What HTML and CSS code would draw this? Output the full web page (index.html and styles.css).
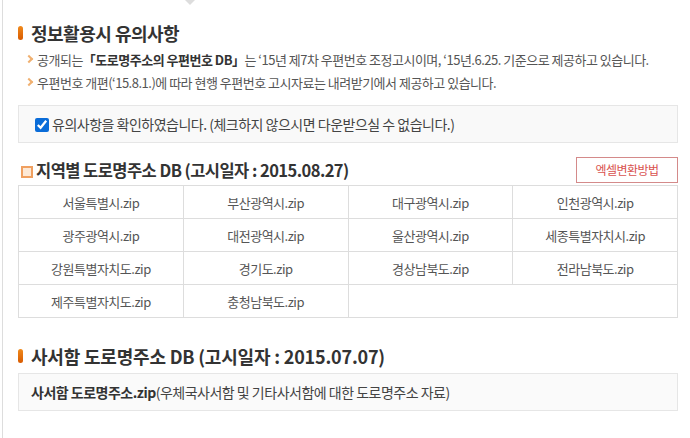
FILE: index.html
```html
<!DOCTYPE html>
<html>
<head>
<meta charset="UTF-8">
<title>도로명주소 DB 내려받기</title>
<link rel="stylesheet" href="styles.css">
</head>
<body>
<div class="wrap">
	<div class="pointer"></div>

	<!-- 정보활용시 유의사항 -->
	<h3 class="tit_bar">정보활용시 유의사항</h3>
	<ul class="notice">
		<li>공개되는<b>「도로명주소의 우편번호 DB」</b>는 ‘15년 제7차 우편번호 조정고시이며, ‘15년.6.25. 기준으로 제공하고 있습니다.</li>
		<li>우편번호 개편(‘15.8.1.)에 따라 현행 우편번호 고시자료는 내려받기에서 제공하고 있습니다.</li>
	</ul>
	<div class="agree">
		<label><input type="checkbox" checked>유의사항을 확인하였습니다. (체크하지 않으시면 다운받으실 수 없습니다.)</label>
	</div>

	<!-- 지역별 -->
	<div class="sub_head">
		<h4 class="tit_box">지역별 도로명주소 DB (고시일자 : 2015.08.27)</h4>
		<a href="#" class="btn_excel">엑셀변환방법</a>
	</div>
	<table class="zip_list">
		<tr>
			<td><a href="#">서울특별시.zip</a></td>
			<td><a href="#">부산광역시.zip</a></td>
			<td><a href="#">대구광역시.zip</a></td>
			<td><a href="#">인천광역시.zip</a></td>
		</tr>
		<tr>
			<td><a href="#">광주광역시.zip</a></td>
			<td><a href="#">대전광역시.zip</a></td>
			<td><a href="#">울산광역시.zip</a></td>
			<td><a href="#">세종특별자치시.zip</a></td>
		</tr>
		<tr>
			<td><a href="#">강원특별자치도.zip</a></td>
			<td><a href="#">경기도.zip</a></td>
			<td><a href="#">경상남북도.zip</a></td>
			<td><a href="#">전라남북도.zip</a></td>
		</tr>
		<tr>
			<td><a href="#">제주특별자치도.zip</a></td>
			<td><a href="#">충청남북도.zip</a></td>
			<td colspan="2"></td>
		</tr>
	</table>

	<!-- 사서함 -->
	<h3 class="tit_bar second">사서함 도로명주소 DB (고시일자 : 2015.07.07)</h3>
	<div class="pobox">
		<a href="#"><b>사서함 도로명주소.zip</b></a>(우체국사서함 및 기타사서함에 대한 도로명주소 자료)
	</div>
</div>
</body>
</html>
```

FILE: styles.css
```css
* {
	box-sizing: border-box
}

body {
	margin: 0;
	font-family: "Noto Sans CJK KR", "Noto Sans", sans-serif;
	color: #444;
	background: #fff
}

a {
	color: inherit;
	text-decoration: none
}

.wrap {
	margin-left: 2px;
	border-left: 1px solid #ddd;
	padding: 0 12px 0 15px;
	min-height: 438px
}

.pointer {
	width: 0;
	height: 0;
	margin-left: 167px;
	border-left: 5px solid transparent;
	border-right: 5px solid transparent;
	border-top: 5px solid #ddd
}

.tit_bar {
	position: relative;
	margin: 16px 0 0;
	padding-left: 13px;
	font-size: 18px;
	font-weight: bold;
	line-height: 24px;
	color: #333;
	letter-spacing: -0.5px
}

.tit_bar:before {
	content: "";
	position: absolute;
	left: 0;
	top: 5px;
	width: 5px;
	height: 14px;
	border-radius: 3px;
	background: linear-gradient(#f08a1c, #d85a00)
}

.tit_bar.second {
	margin-top: 26px;
	letter-spacing: -0.2px
}

.notice {
	list-style: none;
	margin: 3px 0 0;
	padding: 0 0 0 8px
}

.notice li {
	position: relative;
	padding-left: 11px;
	font-size: 13px;
	line-height: 23px;
	color: #555;
	letter-spacing: -0.5px
}

.notice li:before {
	content: "";
	position: absolute;
	left: 0;
	top: 8px;
	width: 4px;
	height: 4px;
	border-top: 2px solid #f0b070;
	border-right: 2px solid #f0b070;
	transform: rotate(45deg)
}

.notice b {
	color: #333
}

.agree {
	margin-top: 11px;
	height: 38px;
	padding: 0 15px;
	border: 1px solid #e6e6e6;
	background: #f9f9f9;
	display: flex;
	align-items: center;
	font-size: 14px;
	color: #444;
	letter-spacing: -0.5px
}

.agree input {
	width: 14px;
	height: 14px;
	margin: 0 3px 0 1px;
	vertical-align: -2px;
	accent-color: #0a6cd8
}

.sub_head {
	display: flex;
	justify-content: space-between;
	align-items: flex-end;
	margin-top: 14px;
	margin-bottom: 2px
}

.tit_box {
	position: relative;
	margin: 0 0 2px;
	padding-left: 18px;
	font-size: 16.5px;
	font-weight: bold;
	line-height: 22px;
	color: #333;
	letter-spacing: -0.55px
}

.tit_box:before {
	content: "";
	position: absolute;
	left: 3px;
	top: 7px;
	width: 8px;
	height: 8px;
	border: 2px solid #f0a060;
	background: #fde9d6
}

.btn_excel {
	display: inline-block;
	width: 102px;
	height: 26px;
	line-height: 24px;
	border: 1px solid #d48a8a;
	text-align: center;
	font-size: 12px;
	color: #d9534f;
	letter-spacing: -0.5px
}

.zip_list {
	width: 100%;
	border-collapse: collapse;
	table-layout: fixed
}

.zip_list td {
	height: 33px;
	border: 1px solid #ddd;
	text-align: center;
	font-size: 13px;
	color: #555;
	letter-spacing: -0.5px
}

.pobox {
	margin-top: 5px;
	height: 38px;
	padding: 0 12px;
	border: 1px solid #e6e6e6;
	background: #fafafa;
	display: flex;
	align-items: center;
	font-size: 14px;
	color: #444;
	letter-spacing: -0.5px
}

.pobox b {
	color: #333
}
```
